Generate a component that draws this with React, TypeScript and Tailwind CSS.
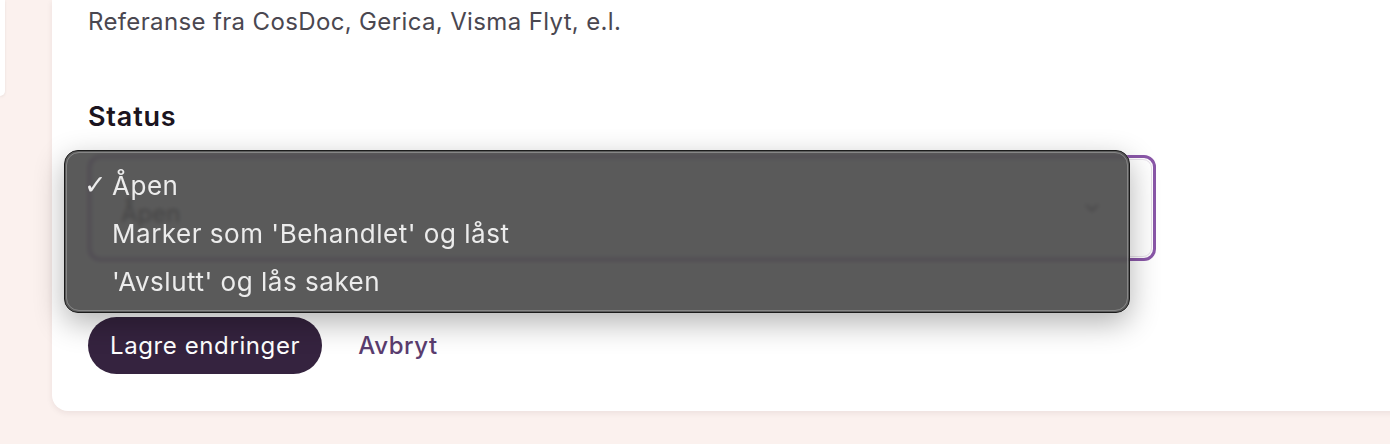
import { ChevronDown } from 'lucide-react'

const OPTIONS = [
  { label: 'Åpen', checked: true },
  { label: "Marker som 'Behandlet' og låst", checked: false },
  { label: "'Avslutt' og lås saken", checked: false },
]

export default function App() {
  return (
    <div className="h-[444px] w-[1390px] overflow-hidden bg-[#fbf1ee] flex items-start" style={{ fontFamily: 'Inter, "Noto Sans", sans-serif' }}>
      <div className="w-[5px] h-[96px] shrink-0 bg-white rounded-br-lg shadow-[0_1px_3px_rgba(0,0,0,0.08)]" />
      <div className="ml-[47px] w-[1400px] shrink-0 bg-white rounded-b-2xl shadow-[0_2px_6px_rgba(60,30,40,0.08)] px-9 pt-[7px] pb-[37px] relative">
        <p className="text-[24px] leading-[30px] tracking-[0.015em] text-[#4a4750]">Referanse fra CosDoc, Gerica, Visma Flyt, e.l.</p>

        <h3 className="mt-[64px] text-[27px] leading-[32px] tracking-[0.03em] font-semibold text-[#1b1420]">Status</h3>

        <div className="mt-[22px] w-[1068px] h-[106px] rounded-xl border-[3px] border-[#8a57a8] p-px">
          <div className="h-full rounded-[9px] border border-[#e7e0ea] flex items-center justify-between pl-7 pr-12">
            <span className="text-[24px] text-[#1e1822] mt-3">Åpen</span>
            <ChevronDown size={22} className="text-[#3a3040]" />
          </div>
        </div>

        <div className="mt-[56px] flex items-center gap-9">
          <button className="h-[57px] px-[22px] rounded-full bg-[#35233f] text-white text-[24px] tracking-[0.025em]">Lagre endringer</button>
          <button className="text-[24px] tracking-[0.025em] text-[#5b3d70] font-medium">Avbryt</button>
        </div>

        <div className="absolute left-[12px] top-[150px] w-[1066px] h-[163px] rounded-[14px] border border-[#1c1c1c] bg-[#484848]/90 backdrop-blur-[2px] shadow-[0_10px_30px_rgba(0,0,0,0.3)] p-px">
          <ul className="h-full rounded-[13px] border border-[#9a9a9a]/70 pt-[8px]">
            {OPTIONS.map(o => (
              <li key={o.label} className="h-[48px] flex items-center text-[26px] tracking-[0.02em] text-[#ececec]">
                <span className="w-[45px] pl-[17px] text-[27px]" style={{ fontFamily: '"DejaVu Sans", sans-serif' }}>{o.checked ? '✓' : ''}</span>
                <span>{o.label}</span>
              </li>
            ))}
          </ul>
        </div>
      </div>
    </div>
  )
}
